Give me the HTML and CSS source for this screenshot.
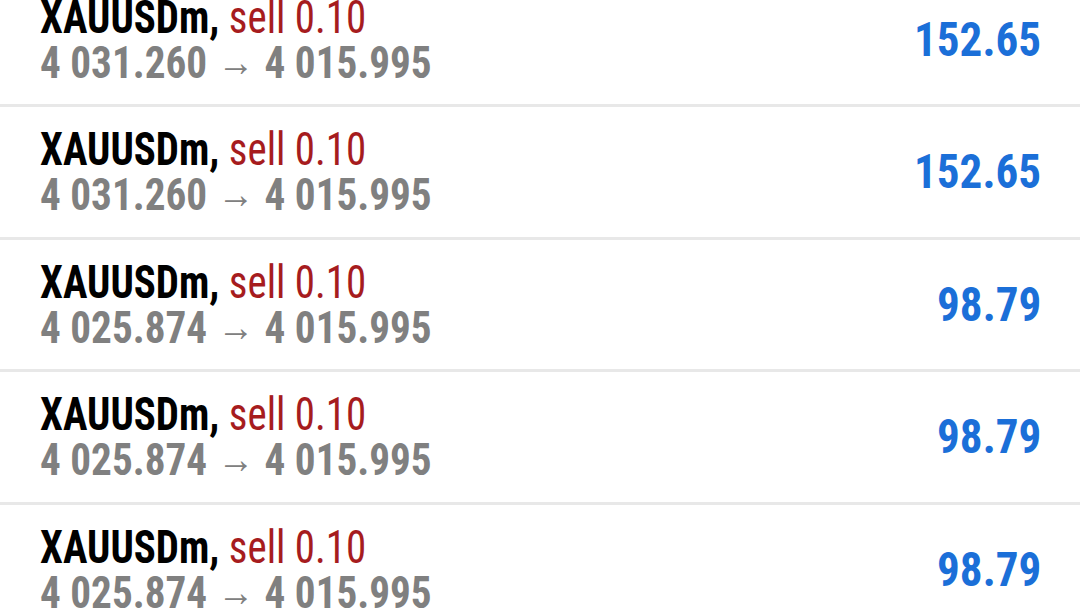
FILE: index.html
```html
<!DOCTYPE html>
<html lang="en">
<head>
    <meta charset="UTF-8">
    <meta name="viewport" content="width=device-width, initial-scale=1.0">
    <title>History</title>
    <link rel="stylesheet" href="styles.css">
</head>
<body>
    <ul id="deals">
        <li class="deal">
            <div class="info">
                <div class="title">XAUUSDm, <span class="sell">sell 0.10</span></div>
                <div class="prices">4 031.260 <span class="arrow">&rarr;</span> 4 015.995</div>
            </div>
            <div class="profit">152.65</div>
        </li>
        <li class="deal">
            <div class="info">
                <div class="title">XAUUSDm, <span class="sell">sell 0.10</span></div>
                <div class="prices">4 031.260 <span class="arrow">&rarr;</span> 4 015.995</div>
            </div>
            <div class="profit">152.65</div>
        </li>
        <li class="deal">
            <div class="info">
                <div class="title">XAUUSDm, <span class="sell">sell 0.10</span></div>
                <div class="prices">4 025.874 <span class="arrow">&rarr;</span> 4 015.995</div>
            </div>
            <div class="profit">98.79</div>
        </li>
        <li class="deal">
            <div class="info">
                <div class="title">XAUUSDm, <span class="sell">sell 0.10</span></div>
                <div class="prices">4 025.874 <span class="arrow">&rarr;</span> 4 015.995</div>
            </div>
            <div class="profit">98.79</div>
        </li>
        <li class="deal">
            <div class="info">
                <div class="title">XAUUSDm, <span class="sell">sell 0.10</span></div>
                <div class="prices">4 025.874 <span class="arrow">&rarr;</span> 4 015.995</div>
            </div>
            <div class="profit">98.79</div>
        </li>
    </ul>
</body>
</html>
```
FILE: styles.css
```css
body{
    margin: 0;
    background: #fff;
    font-family: "Roboto Condensed", Roboto, sans-serif;
    overflow: hidden;
}
#deals{
    list-style: none;
    margin: -25.5px 0 0;
    padding: 0;
}
.deal{
    box-sizing: border-box;
    height: 132.5px;
    border-bottom: 3px solid #e8e8e8;
    display: flex;
    align-items: center;
    justify-content: space-between;
    padding: 1px 39px 0 40px;
}
.title{
    font-size: 46px; font-weight: bold; color: #000; line-height: 46px;
    transform: scaleX(0.89); transform-origin: left center;
}
.sell{
    font-weight: normal; color: #a61c1e;
}
.prices{
    font-size: 45px; font-weight: bold; color: #808080; line-height: 46px;
    white-space: nowrap;
    transform: scaleX(0.915); transform-origin: left center;
}
.arrow{
    display: inline-block;
    font-weight: normal; font-size: 40px; margin: 0 1px;
    vertical-align: 2px;
}
.profit{
    font-size: 49px; font-weight: bold; color: #1b6fd8;
    transform: scaleX(0.92); transform-origin: right center;
    margin-top: -1px;
}
```
